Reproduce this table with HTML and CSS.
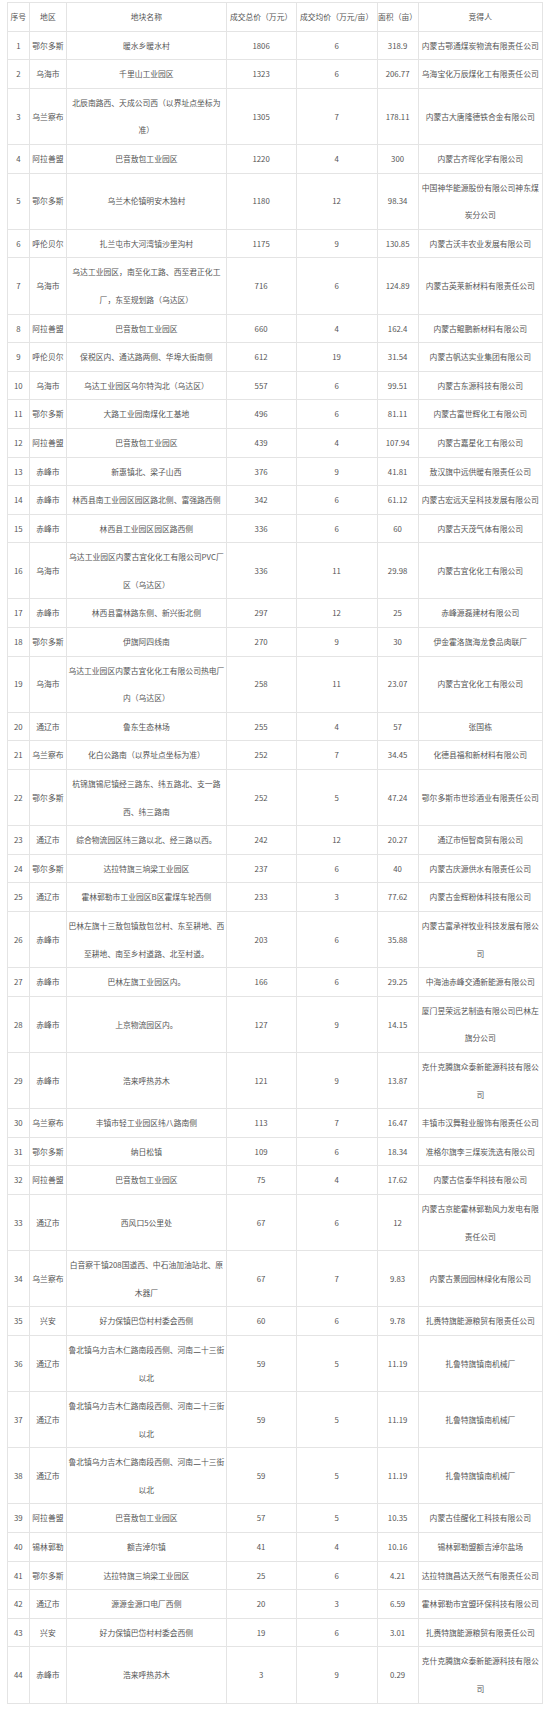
FILE: index.html
```html
<!DOCTYPE html>
<html lang="zh-CN">
<head>
<meta charset="utf-8">
<title>土地成交表</title>
<link rel="stylesheet" href="styles.css">
</head>
<body>
<table class="deals">
<colgroup>
<col class="c-no"><col class="c-area"><col class="c-name"><col class="c-total"><col class="c-avg"><col class="c-size"><col class="c-winner">
</colgroup>
<thead>
<tr><th>序号</th><th>地区</th><th>地块名称</th><th>成交总价（万元）</th><th>成交均价（万元/亩）</th><th>面积（亩）</th><th>竞得人</th></tr>
</thead>
<tbody>
<tr><td>1</td><td>鄂尔多斯</td><td>暖水乡暖水村</td><td>1806</td><td>6</td><td>318.9</td><td>内蒙古鄂通煤炭物流有限责任公司</td></tr>
<tr><td>2</td><td>乌海市</td><td>千里山工业园区</td><td>1323</td><td>6</td><td>206.77</td><td>乌海宝化万辰煤化工有限责任公司</td></tr>
<tr><td>3</td><td>乌兰察布</td><td>北辰南路西、天成公司西（以界址点坐标为<br>准）</td><td>1305</td><td>7</td><td>178.11</td><td>内蒙古大唐隆德铁合金有限公司</td></tr>
<tr><td>4</td><td>阿拉善盟</td><td>巴音敖包工业园区</td><td>1220</td><td>4</td><td>300</td><td>内蒙古齐晖化学有限公司</td></tr>
<tr><td>5</td><td>鄂尔多斯</td><td>乌兰木伦镇明安木独村</td><td>1180</td><td>12</td><td>98.34</td><td>中国神华能源股份有限公司神东煤<br>炭分公司</td></tr>
<tr><td>6</td><td>呼伦贝尔</td><td>扎兰屯市大河湾镇沙里沟村</td><td>1175</td><td>9</td><td>130.85</td><td>内蒙古沃丰农业发展有限公司</td></tr>
<tr><td>7</td><td>乌海市</td><td>乌达工业园区，南至化工路、西至君正化工<br>厂，东至规划路（乌达区）</td><td>716</td><td>6</td><td>124.89</td><td>内蒙古英莱新材料有限责任公司</td></tr>
<tr><td>8</td><td>阿拉善盟</td><td>巴音敖包工业园区</td><td>660</td><td>4</td><td>162.4</td><td>内蒙古鲲鹏新材料有限公司</td></tr>
<tr><td>9</td><td>呼伦贝尔</td><td>保税区内、通达路两侧、华埠大街南侧</td><td>612</td><td>19</td><td>31.54</td><td>内蒙古帆达实业集团有限公司</td></tr>
<tr><td>10</td><td>乌海市</td><td>乌达工业园区乌尔特沟北（乌达区）</td><td>557</td><td>6</td><td>99.51</td><td>内蒙古东源科技有限公司</td></tr>
<tr><td>11</td><td>鄂尔多斯</td><td>大路工业园南煤化工基地</td><td>496</td><td>6</td><td>81.11</td><td>内蒙古富世辉化工有限公司</td></tr>
<tr><td>12</td><td>阿拉善盟</td><td>巴音敖包工业园区</td><td>439</td><td>4</td><td>107.94</td><td>内蒙古嘉星化工有限公司</td></tr>
<tr><td>13</td><td>赤峰市</td><td>新惠镇北、梁子山西</td><td>376</td><td>9</td><td>41.81</td><td>敖汉旗中远供暖有限责任公司</td></tr>
<tr><td>14</td><td>赤峰市</td><td>林西县南工业园区园区路北侧、富强路西侧</td><td>342</td><td>6</td><td>61.12</td><td>内蒙古宏远天呈科技发展有限公司</td></tr>
<tr><td>15</td><td>赤峰市</td><td>林西县工业园区园区路西侧</td><td>336</td><td>6</td><td>60</td><td>内蒙古天茂气体有限公司</td></tr>
<tr><td>16</td><td>乌海市</td><td>乌达工业园区内蒙古宜化化工有限公司PVC厂<br>区（乌达区）</td><td>336</td><td>11</td><td>29.98</td><td>内蒙古宜化化工有限公司</td></tr>
<tr><td>17</td><td>赤峰市</td><td>林西县富林路东侧、新兴街北侧</td><td>297</td><td>12</td><td>25</td><td>赤峰源磊建材有限公司</td></tr>
<tr><td>18</td><td>鄂尔多斯</td><td>伊旗阿四线南</td><td>270</td><td>9</td><td>30</td><td>伊金霍洛旗海龙食品肉联厂</td></tr>
<tr><td>19</td><td>乌海市</td><td>乌达工业园区内蒙古宜化化工有限公司热电厂<br>内（乌达区）</td><td>258</td><td>11</td><td>23.07</td><td>内蒙古宜化化工有限公司</td></tr>
<tr><td>20</td><td>通辽市</td><td>鲁东生态林场</td><td>255</td><td>4</td><td>57</td><td>张国栋</td></tr>
<tr><td>21</td><td>乌兰察布</td><td>化白公路南（以界址点坐标为准）</td><td>252</td><td>7</td><td>34.45</td><td>化德县福和新材料有限公司</td></tr>
<tr><td>22</td><td>鄂尔多斯</td><td>杭锦旗锡尼镇经三路东、纬五路北、支一路<br>西、纬三路南</td><td>252</td><td>5</td><td>47.24</td><td>鄂尔多斯市世珍酒业有限责任公司</td></tr>
<tr><td>23</td><td>通辽市</td><td>综合物流园区纬三路以北、经三路以西。</td><td>242</td><td>12</td><td>20.27</td><td>通辽市恒智商贸有限公司</td></tr>
<tr><td>24</td><td>鄂尔多斯</td><td>达拉特旗三垧梁工业园区</td><td>237</td><td>6</td><td>40</td><td>内蒙古庆源供水有限责任公司</td></tr>
<tr><td>25</td><td>通辽市</td><td>霍林郭勒市工业园区B区霍煤车轮西侧</td><td>233</td><td>3</td><td>77.62</td><td>内蒙古金辉粉体科技有限公司</td></tr>
<tr><td>26</td><td>赤峰市</td><td>巴林左旗十三敖包镇敖包岔村、东至耕地、西<br>至耕地、南至乡村道路、北至村道。</td><td>203</td><td>6</td><td>35.88</td><td>内蒙古富承祥牧业科技发展有限公<br>司</td></tr>
<tr><td>27</td><td>赤峰市</td><td>巴林左旗工业园区内。</td><td>166</td><td>6</td><td>29.25</td><td>中海油赤峰交通新能源有限公司</td></tr>
<tr><td>28</td><td>赤峰市</td><td>上京物流园区内。</td><td>127</td><td>9</td><td>14.15</td><td>厦门昱荣远艺制造有限公司巴林左<br>旗分公司</td></tr>
<tr><td>29</td><td>赤峰市</td><td>浩来呼热苏木</td><td>121</td><td>9</td><td>13.87</td><td>克什克腾旗众泰新能源科技有限公<br>司</td></tr>
<tr><td>30</td><td>乌兰察布</td><td>丰镇市轻工业园区纬八路南侧</td><td>113</td><td>7</td><td>16.47</td><td>丰镇市汉舞鞋业服饰有限责任公司</td></tr>
<tr><td>31</td><td>鄂尔多斯</td><td>纳日松镇</td><td>109</td><td>6</td><td>18.34</td><td>准格尔旗李三煤炭洗选有限公司</td></tr>
<tr><td>32</td><td>阿拉善盟</td><td>巴音敖包工业园区</td><td>75</td><td>4</td><td>17.62</td><td>内蒙古信泰华科技有限公司</td></tr>
<tr><td>33</td><td>通辽市</td><td>西风口5公里处</td><td>67</td><td>6</td><td>12</td><td>内蒙古京能霍林郭勒风力发电有限<br>责任公司</td></tr>
<tr><td>34</td><td>乌兰察布</td><td>白音察干镇208国道西、中石油加油站北、原<br>木器厂</td><td>67</td><td>7</td><td>9.83</td><td>内蒙古景园园林绿化有限公司</td></tr>
<tr><td>35</td><td>兴安</td><td>好力保镇巴岱村村委会西侧</td><td>60</td><td>6</td><td>9.78</td><td>扎赉特旗能源粮贸有限责任公司</td></tr>
<tr><td>36</td><td>通辽市</td><td>鲁北镇乌力吉木仁路南段西侧、河南二十三街<br>以北</td><td>59</td><td>5</td><td>11.19</td><td>扎鲁特旗镇南机械厂</td></tr>
<tr><td>37</td><td>通辽市</td><td>鲁北镇乌力吉木仁路南段西侧、河南二十三街<br>以北</td><td>59</td><td>5</td><td>11.19</td><td>扎鲁特旗镇南机械厂</td></tr>
<tr><td>38</td><td>通辽市</td><td>鲁北镇乌力吉木仁路南段西侧、河南二十三街<br>以北</td><td>59</td><td>5</td><td>11.19</td><td>扎鲁特旗镇南机械厂</td></tr>
<tr><td>39</td><td>阿拉善盟</td><td>巴音敖包工业园区</td><td>57</td><td>5</td><td>10.35</td><td>内蒙古佳醒化工科技有限公司</td></tr>
<tr><td>40</td><td>锡林郭勒</td><td>额吉淖尔镇</td><td>41</td><td>4</td><td>10.16</td><td>锡林郭勒盟额吉淖尔盐场</td></tr>
<tr><td>41</td><td>鄂尔多斯</td><td>达拉特旗三垧梁工业园区</td><td>25</td><td>6</td><td>4.21</td><td>达拉特旗昌达天然气有限责任公司</td></tr>
<tr><td>42</td><td>通辽市</td><td>源源金源口电厂西侧</td><td>20</td><td>3</td><td>6.59</td><td>霍林郭勒市宜盟环保科技有限公司</td></tr>
<tr><td>43</td><td>兴安</td><td>好力保镇巴岱村村委会西侧</td><td>19</td><td>6</td><td>3.01</td><td>扎赉特旗能源粮贸有限责任公司</td></tr>
<tr><td>44</td><td>赤峰市</td><td>浩来呼热苏木</td><td>3</td><td>9</td><td>0.29</td><td>克什克腾旗众泰新能源科技有限公<br>司</td></tr>
</tbody>
</table>
</body>
</html>
```
FILE: styles.css
```css
html, body {
  margin: 0;
  padding: 0;
  background: #ffffff;
}

body {
  padding: 2px 8px 0 7px;
  font-family: "Noto Sans CJK SC", "Noto Sans", sans-serif;
  font-size: 7.8px;
  color: #555555;
}

.deals {
  border-collapse: collapse;
  table-layout: fixed;
  width: 535px;
}

.c-no { width: 21.6px; }
.c-area { width: 37.6px; }
.c-name { width: 159.4px; }
.c-total { width: 70px; }
.c-avg { width: 81px; }
.c-size { width: 41px; }
.c-winner { width: 124.4px; }

.deals th,
.deals td {
  border: 1px solid #e4e4e4;
  padding: 0;
  line-height: 27.6px;
  text-align: center;
  vertical-align: middle;
  white-space: nowrap;
  font-weight: normal;
}
```
